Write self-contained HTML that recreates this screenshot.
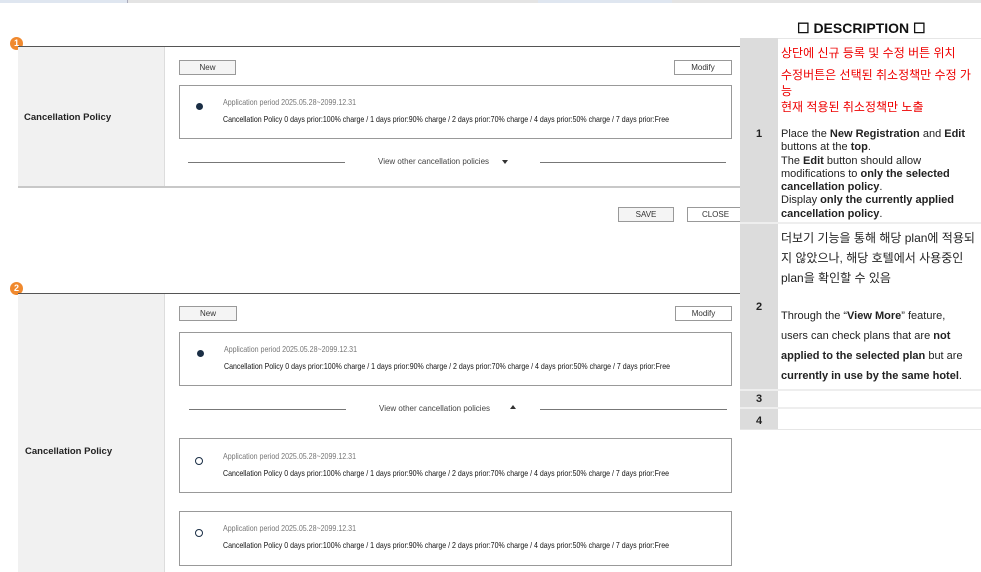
<!DOCTYPE html>
<html><head><meta charset="utf-8"><style>
*{margin:0;padding:0;box-sizing:border-box}
body{width:981px;height:572px;background:#fff;position:relative;overflow:hidden;font-family:"Liberation Sans","Noto Sans CJK KR",sans-serif;color:#222}
.a{position:absolute}
.btn{position:absolute;border:1px solid #999;background:#f4f4f4;font-size:8px;text-align:center;color:#333;line-height:13px}
.box{position:absolute;border:1px solid #999;background:#fff}
.lbl{position:absolute;font-size:9.5px;font-weight:bold;color:#222}
.badge{position:absolute;width:13px;height:13px;border-radius:50%;background:#f0892e;color:#fff;font-size:9px;font-weight:bold;text-align:center;line-height:13px}
.hr{position:absolute;height:1px;background:#666}
svg text{font-family:"Liberation Sans",sans-serif}
.desc{font-size:11px;line-height:13.3px;color:#222}
.kr{position:absolute;left:781px;color:#e00;font-size:12px;line-height:14px;white-space:nowrap}
</style></head><body>
<div class="a" style="left:0;top:0;width:981px;height:3px;background:#e4e4e4"></div>
<div class="a" style="left:0;top:0;width:128px;height:3px;background:#dfe6f0;border-right:1px solid #aab"></div>
<div class="a" style="left:538px;top:0;width:134px;height:3px;background:#dfe6f0"></div>

<div class="badge" style="left:10px;top:37px">1</div>
<div class="hr" style="left:18px;top:46px;width:725px;background:#555"></div>
<div class="a" style="left:18px;top:47px;width:147px;height:140px;background:#f1f1f1;border-right:1px solid #ddd"></div>
<div class="a" style="left:18px;top:186px;width:725px;height:2px;background:#c8c8c8"></div>
<div class="lbl" style="left:24px;top:112px">Cancellation Policy</div>
<div class="btn" style="left:179px;top:60px;width:57px;height:15px">New</div>
<div class="btn" style="left:674px;top:60px;width:58px;height:15px;background:#fff">Modify</div>
<div class="box" style="left:179px;top:85px;width:553px;height:54px"></div>
<div class="a" style="left:196px;top:103px;width:7px;height:7px;border-radius:50%;background:#1a2e45"></div>
<svg class="a" style="left:223px;top:96px" width="460" height="32"><text x="0" y="9" font-size="8.5" fill="#777" textLength="133" lengthAdjust="spacingAndGlyphs">Application period 2025.05.28~2099.12.31</text><text x="0" y="26" font-size="8.5" fill="#111" textLength="446" lengthAdjust="spacingAndGlyphs">Cancellation Policy 0 days prior:100% charge / 1 days prior:90% charge / 2 days prior:70% charge / 4 days prior:50% charge / 7 days prior:Free</text></svg>
<div class="hr" style="left:188px;top:162px;width:157px;background:#777"></div>
<div class="a" style="left:378px;top:157px;font-size:8px;color:#444">View other cancellation policies</div>
<div class="a" style="left:502px;top:160px;width:0;height:0;border-left:3px solid transparent;border-right:3px solid transparent;border-top:4px solid #333"></div>
<div class="hr" style="left:540px;top:162px;width:186px;background:#777"></div>
<div class="btn" style="left:618px;top:207px;width:56px;height:15px">SAVE</div>
<div class="btn" style="left:687px;top:207px;width:57px;height:15px;background:#fff">CLOSE</div>

<div class="badge" style="left:10px;top:282px">2</div>
<div class="hr" style="left:18px;top:293px;width:725px;background:#555"></div>
<div class="a" style="left:18px;top:294px;width:147px;height:278px;background:#f1f1f1;border-right:1px solid #ddd"></div>
<div class="lbl" style="left:25px;top:446px">Cancellation Policy</div>
<div class="btn" style="left:179px;top:306px;width:58px;height:15px">New</div>
<div class="btn" style="left:675px;top:306px;width:57px;height:15px;background:#fff">Modify</div>
<div class="box" style="left:179px;top:332px;width:553px;height:54px"></div>
<div class="a" style="left:197px;top:350px;width:7px;height:7px;border-radius:50%;background:#1a2e45"></div>
<svg class="a" style="left:224px;top:343px" width="460" height="32"><text x="0" y="9" font-size="8.5" fill="#777" textLength="133" lengthAdjust="spacingAndGlyphs">Application period 2025.05.28~2099.12.31</text><text x="0" y="26" font-size="8.5" fill="#111" textLength="446" lengthAdjust="spacingAndGlyphs">Cancellation Policy 0 days prior:100% charge / 1 days prior:90% charge / 2 days prior:70% charge / 4 days prior:50% charge / 7 days prior:Free</text></svg>
<div class="hr" style="left:189px;top:409px;width:157px;background:#777"></div>
<div class="a" style="left:379px;top:404px;font-size:8px;color:#444">View other cancellation policies</div>
<div class="a" style="left:510px;top:405px;width:0;height:0;border-left:3px solid transparent;border-right:3px solid transparent;border-bottom:4px solid #333"></div>
<div class="hr" style="left:540px;top:409px;width:187px;background:#777"></div>

<div class="box" style="left:179px;top:438px;width:553px;height:55px"></div>
<div class="a" style="left:195px;top:457px;width:8px;height:8px;border-radius:50%;border:1.3px solid #1a2e45"></div>
<svg class="a" style="left:223px;top:450px" width="460" height="32"><text x="0" y="9" font-size="8.5" fill="#777" textLength="133" lengthAdjust="spacingAndGlyphs">Application period 2025.05.28~2099.12.31</text><text x="0" y="26" font-size="8.5" fill="#111" textLength="446" lengthAdjust="spacingAndGlyphs">Cancellation Policy 0 days prior:100% charge / 1 days prior:90% charge / 2 days prior:70% charge / 4 days prior:50% charge / 7 days prior:Free</text></svg>

<div class="box" style="left:179px;top:511px;width:553px;height:55px"></div>
<div class="a" style="left:195px;top:529px;width:8px;height:8px;border-radius:50%;border:1.3px solid #1a2e45"></div>
<svg class="a" style="left:223px;top:522px" width="460" height="32"><text x="0" y="9" font-size="8.5" fill="#777" textLength="133" lengthAdjust="spacingAndGlyphs">Application period 2025.05.28~2099.12.31</text><text x="0" y="26" font-size="8.5" fill="#111" textLength="446" lengthAdjust="spacingAndGlyphs">Cancellation Policy 0 days prior:100% charge / 1 days prior:90% charge / 2 days prior:70% charge / 4 days prior:50% charge / 7 days prior:Free</text></svg>

<div class="a" style="left:797px;top:20px;font-size:14px;font-weight:bold;color:#111">☐ DESCRIPTION ☐</div>
<div class="a" style="left:740px;top:38px;width:38px;height:392px;background:#dcdcdc"></div>
<div class="a" style="left:778px;top:38px;width:203px;height:1px;background:#e6e6e6"></div>
<div class="a" style="left:740px;top:222px;width:241px;height:2px;background:#eee"></div>
<div class="a" style="left:740px;top:389px;width:241px;height:2px;background:#eee"></div>
<div class="a" style="left:740px;top:407px;width:241px;height:2px;background:#eee"></div>
<div class="a" style="left:740px;top:429px;width:241px;height:1px;background:#e6e6e6"></div>
<div class="a" style="left:756px;top:128px;font-size:11px;font-weight:bold">1</div>
<div class="a" style="left:756px;top:301px;font-size:11px;font-weight:bold">2</div>
<div class="a" style="left:756px;top:393px;font-size:11px;font-weight:bold">3</div>
<div class="a" style="left:756px;top:415px;font-size:11px;font-weight:bold">4</div>
<div class="kr" style="top:46px">상단에 신규 등록 및 수정 버튼 위치</div>
<div class="kr" style="top:68px">수정버튼은 선택된 취소정책만 수정 가</div>
<div class="kr" style="top:84px">능</div>
<div class="kr" style="top:100px">현재 적용된 취소정책만 노출</div>
<div class="a desc" style="left:781px;top:128px;width:198px">Place the <b>New Registration</b> and <b>Edit</b> buttons at the <b>top</b>.<br>The <b>Edit</b> button should allow modifications to <b>only the selected cancellation policy</b>.<br>Display <b>only the currently applied cancellation policy</b>.</div>
<div class="a" style="left:781px;top:228px;font-size:12px;line-height:20px;white-space:nowrap">더보기 기능을 통해 해당 plan에 적용되<br>지 않았으나, 해당 호텔에서 사용중인<br>plan을 확인할 수 있음</div>
<div class="a" style="left:781px;top:306px;width:194px;font-size:11px;line-height:20px">Through the “<b>View More</b>” feature,<br>users can check plans that are <b>not applied to the selected plan</b> but are <b>currently in use by the same hotel</b>.</div>
</body></html>
